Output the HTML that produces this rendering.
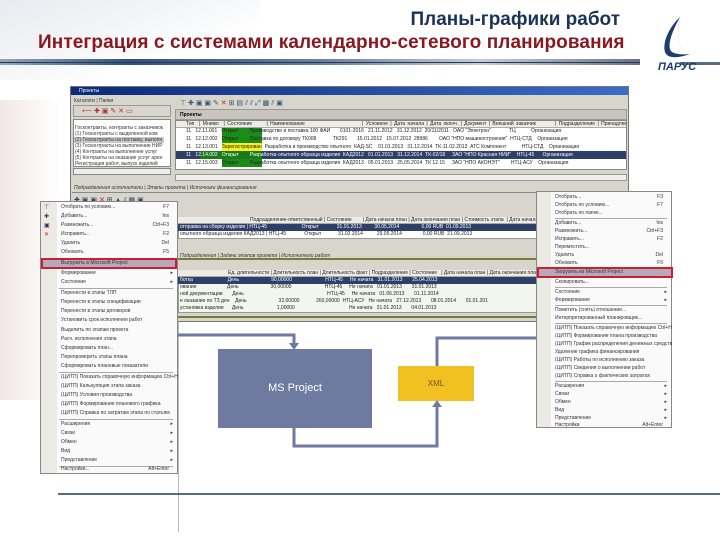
<!DOCTYPE html>
<html><head><meta charset="utf-8"><style>
*{margin:0;padding:0;box-sizing:border-box}
body{width:720px;height:540px;position:relative;overflow:hidden;background:#fff;font-family:"Liberation Sans",sans-serif}
.a{position:absolute}
.t{font-size:5px;color:#333;white-space:nowrap;overflow:hidden}
.row{position:absolute;height:7px;font-size:5px;line-height:7px;white-space:nowrap;overflow:hidden;color:#222}
.mi{position:absolute;left:0;right:0;height:9px;font-size:5px;line-height:9px;padding-left:20px;color:#333;white-space:nowrap}
.sep{position:absolute;left:18px;right:4px;height:1px;background:#aaa}
</style></head><body>
<div class="a" style="left:0;top:0;width:260px;height:80px;background:linear-gradient(160deg,#e8ebf0 0%,#f4f5f7 40%,#fff 70%)"></div>
<div class="a" style="left:0;top:100px;width:60px;height:300px;background:linear-gradient(90deg,#f2e6e6,#fff)"></div>
<div class="a" style="left:0;top:59px;width:640px;height:6px;background:linear-gradient(90deg,#9aa5b5,#34507a 20%,#6d7f9c 50%,#c8ccd3 75%,#6a7486 100%)"></div>
<div class="a" style="left:0;top:62px;width:640px;height:1px;background:#1e3b65"></div>
<div class="a" style="left:680px;top:62px;width:40px;height:3px;background:#5a6a80"></div>
<div class="a" style="right:100px;top:9px;font-size:19px;font-weight:bold;color:#1b3358;white-space:nowrap">Планы-графики работ</div>
<div class="a" style="left:38px;top:32px;font-size:19px;font-weight:bold;color:#8a1820;white-space:nowrap;width:582px;letter-spacing:0.1px">Интеграция с системами календарно-сетевого планирования</div>
<svg class="a" style="left:656px;top:14px" width="46" height="60" viewBox="0 0 46 60">
<path d="M24 3 C14 12 6 28 9 38 C11 44 20 45 34 40 C24 41 15 40 14 35 C12 27 18 14 24 3 Z" fill="#1d3d6e"/>
<path d="M24 3 C22 14 21 26 26 36 C22 28 21 16 24 3Z" fill="#1d3d6e"/>
<text x="2" y="56" font-size="11" font-style="italic" font-weight="bold" fill="#1d3d6e" font-family="Liberation Sans,sans-serif">ПАРУС</text>
</svg>
<div class="a" style="left:70px;top:86px;width:559px;height:236px;background:#d8d6cc;border:1px solid #777"></div>
<div class="a" style="left:71px;top:87px;width:557px;height:8px;background:linear-gradient(90deg,#0b2a78,#3b6cc8);color:#fff;font-size:5px;line-height:8px;padding-left:8px">Проекты</div>
<div class="a t" style="left:74px;top:98px">Каталоги | Папки</div>
<div class="a" style="left:73px;top:105px;width:98px;height:12px;border:1px solid #999"></div>
<div class="a t" style="left:82px;top:107px;color:#a33;font-size:7px">⟵ ✚ ▣ ✎ ✕ ▭</div>
<div class="a" style="left:73px;top:119px;width:98px;height:48px;background:#fff;border:1px solid #888"></div>
<div class="a t" style="left:75px;top:125px;width:88px">Госконтракты, контракты с заказчиком</div>
<div class="a t" style="left:75px;top:131px;width:88px">(1) Госконтракты с выделенной ком</div>
<div class="a" style="left:74px;top:137px;width:90px;height:6px;background:#c9c9c9"></div>
<div class="a t" style="left:75px;top:137px;width:88px">(2) Госконтракты на поставку, выполн</div>
<div class="a t" style="left:75px;top:143px;width:88px">(3) Госконтракты на выполнение НИР</div>
<div class="a t" style="left:75px;top:149px;width:88px">(4) Контракты на выполнение услуг</div>
<div class="a t" style="left:75px;top:155px;width:88px">(5) Контракты на оказание услуг арен</div>
<div class="a t" style="left:75px;top:161px;width:88px">Регистрация работ, выпуск изделий</div>
<div class="a" style="left:73px;top:168px;width:98px;height:7px;background:#eee;border:1px solid #888"></div>
<div class="a t" style="left:180px;top:99px;font-size:7px;color:#357">⊤ ✚ ▣ ▣ ✎ <span style="color:#c22">✕</span> ⊞ ▤ ⫽ ⫽ ⤢ ▩ ⫽ ▣</div>
<div class="a" style="left:175px;top:109px;width:452px;height:11px;background:#c8c6bc;border:1px solid #999;font-size:5px;line-height:10px;padding-left:4px;font-weight:bold">Проекты</div>
<div class="a" style="left:175px;top:120px;width:452px;height:50px;background:#fff;border:1px solid #888"></div>
<div class="a" style="left:176px;top:121px;width:450px;height:7px;background:#ecebe4;border-bottom:1px solid #aaa"></div>
<div class="row" style="left:186px;top:121px;width:440px;word-spacing:1px">Тип &nbsp;| Мнемо &nbsp;| Состояние &nbsp;&nbsp;&nbsp;&nbsp;&nbsp;| Наименование &nbsp;&nbsp;&nbsp;&nbsp;&nbsp;&nbsp;&nbsp;&nbsp;&nbsp;&nbsp;&nbsp;&nbsp;&nbsp;&nbsp;&nbsp;&nbsp;&nbsp;&nbsp;&nbsp;&nbsp;&nbsp;&nbsp;&nbsp;| Условное | Дата начала | Дата оконч. | Документ | Внешний заказчик &nbsp;&nbsp;&nbsp;&nbsp;&nbsp;&nbsp;&nbsp;| Подразделение | Принадлежность</div>
<div class="a" style="left:176px;top:151px;width:450px;height:8px;background:#2e3f6a"></div>
<div class="a" style="left:222px;top:128px;width:40px;height:8px;background:#1a8c1a"></div>
<div class="a" style="left:222px;top:136px;width:40px;height:8px;background:#1a8c1a"></div>
<div class="a" style="left:222px;top:143px;width:40px;height:8px;background:#f6f020"></div>
<div class="a" style="left:200px;top:151px;width:62px;height:8px;background:#1a7a1a"></div>
<div class="a" style="left:222px;top:159px;width:40px;height:8px;background:#1a8c1a"></div>
<div class="row" style="left:186px;top:128px;width:440px">11 &nbsp;&nbsp;12.11.001 &nbsp;&nbsp;Открыт &nbsp;&nbsp;&nbsp;&nbsp;&nbsp;&nbsp;&nbsp;Производство и поставка 100 ФАИ &nbsp;&nbsp;&nbsp;&nbsp;&nbsp;&nbsp;0101-2016 &nbsp;&nbsp;21.11.2012 &nbsp;&nbsp;31.12.2012 &nbsp;20/11/2011 &nbsp;&nbsp;ОАО "Электрон" &nbsp;&nbsp;&nbsp;&nbsp;&nbsp;&nbsp;&nbsp;&nbsp;&nbsp;&nbsp;&nbsp;&nbsp;ТЦ &nbsp;&nbsp;&nbsp;&nbsp;&nbsp;&nbsp;&nbsp;&nbsp;&nbsp;&nbsp;Организация</div>
<div class="row" style="left:186px;top:136px;width:440px">11 &nbsp;&nbsp;12.12.002 &nbsp;&nbsp;Открыт &nbsp;&nbsp;&nbsp;&nbsp;&nbsp;&nbsp;&nbsp;Поставка по договору ТК008 &nbsp;&nbsp;&nbsp;&nbsp;&nbsp;&nbsp;&nbsp;&nbsp;&nbsp;&nbsp;&nbsp;ТК291 &nbsp;&nbsp;&nbsp;&nbsp;&nbsp;&nbsp;15.01.2012 &nbsp;&nbsp;15.07.2012 &nbsp;28986 &nbsp;&nbsp;&nbsp;&nbsp;&nbsp;&nbsp;&nbsp;ОАО "НПО машиностроения" &nbsp;НТЦ-СТД &nbsp;&nbsp;&nbsp;Организация</div>
<div class="row" style="left:186px;top:144px;width:440px">11 &nbsp;&nbsp;12.13.001 &nbsp;&nbsp;Зарегистрирован &nbsp;Разработка и производство опытного &nbsp;КАД-SC &nbsp;&nbsp;&nbsp;01.01.2013 &nbsp;&nbsp;31.12.2014 &nbsp;ТК-11.02.2013 &nbsp;АТС Компонент &nbsp;&nbsp;&nbsp;&nbsp;&nbsp;&nbsp;&nbsp;&nbsp;&nbsp;&nbsp;НТЦ-СТД &nbsp;&nbsp;&nbsp;Организация</div>
<div class="row" style="left:186px;top:152px;width:440px;color:#fff">11 &nbsp;&nbsp;12.14.002 &nbsp;&nbsp;Открыт &nbsp;&nbsp;&nbsp;&nbsp;&nbsp;&nbsp;&nbsp;Разработка опытного образца изделия &nbsp;КАД2012 &nbsp;&nbsp;01.01.2013 &nbsp;&nbsp;31.12.2014 &nbsp;ТК-02/18 &nbsp;&nbsp;&nbsp;&nbsp;ЗАО "НПО Красная НИИ" &nbsp;&nbsp;&nbsp;НТЦ-45 &nbsp;&nbsp;&nbsp;&nbsp;&nbsp;Организация</div>
<div class="row" style="left:186px;top:160px;width:440px">11 &nbsp;&nbsp;12.15.003 &nbsp;&nbsp;Открыт &nbsp;&nbsp;&nbsp;&nbsp;&nbsp;&nbsp;&nbsp;Разработка опытного образца изделия &nbsp;КАД2013 &nbsp;&nbsp;05.01.2013 &nbsp;&nbsp;25.05.2014 &nbsp;ТК 12.15 &nbsp;&nbsp;&nbsp;&nbsp;ЗАО "НПО АКОНЭТ" &nbsp;&nbsp;&nbsp;&nbsp;&nbsp;&nbsp;&nbsp;НТЦ-АСУ &nbsp;&nbsp;&nbsp;Организация</div>
<div class="a" style="left:175px;top:174px;width:452px;height:7px;background:#eee;border:1px solid #999"></div>
<div class="a t" style="left:74px;top:185px;font-style:italic">Подразделения исполнители | Этапы проекта | Источники финансирования</div>
<div class="a" style="left:72px;top:192px;width:556px;height:1px;background:#888"></div>
<div class="a t" style="left:74px;top:196px;font-size:7px;color:#345">✚ ▣ ▣ <span style="color:#c22">✕</span> ⊞ ▲ ⫽ ▩ ▣</div>
<div class="a" style="left:178px;top:217px;width:450px;height:22px;background:#fff;border:1px solid #999"></div>
<div class="a" style="left:178px;top:217px;width:450px;height:7px;background:#ecebe4;border-bottom:1px solid #aaa"></div>
<div class="row" style="left:250px;top:217px;width:378px">Подразделение-ответственный | Состояние &nbsp;&nbsp;&nbsp;&nbsp;&nbsp;&nbsp;&nbsp;| Дата начала план | Дата окончания план | Стоимость этапа &nbsp;| Дата начала</div>
<div class="a" style="left:178px;top:224px;width:450px;height:7px;background:#2e3f6a"></div>
<div class="row" style="left:180px;top:224px;width:448px;color:#fff">отправка на сборку изделия | НТЦ-45 &nbsp;&nbsp;&nbsp;&nbsp;&nbsp;&nbsp;&nbsp;&nbsp;&nbsp;&nbsp;&nbsp;&nbsp;&nbsp;&nbsp;&nbsp;&nbsp;&nbsp;&nbsp;&nbsp;&nbsp;&nbsp;&nbsp;&nbsp;&nbsp;Открыт &nbsp;&nbsp;&nbsp;&nbsp;&nbsp;&nbsp;&nbsp;&nbsp;&nbsp;&nbsp;&nbsp;&nbsp;31.01.2013 &nbsp;&nbsp;&nbsp;&nbsp;&nbsp;&nbsp;&nbsp;&nbsp;30.05.2014 &nbsp;&nbsp;&nbsp;&nbsp;&nbsp;&nbsp;&nbsp;&nbsp;&nbsp;&nbsp;&nbsp;&nbsp;&nbsp;&nbsp;&nbsp;0,00 RUB &nbsp;01.09.2013</div>
<div class="row" style="left:180px;top:231px;width:448px">опытного образца изделия КАД2013 | НТЦ-45 &nbsp;&nbsp;&nbsp;&nbsp;&nbsp;&nbsp;&nbsp;&nbsp;&nbsp;&nbsp;&nbsp;&nbsp;Открыт &nbsp;&nbsp;&nbsp;&nbsp;&nbsp;&nbsp;&nbsp;&nbsp;&nbsp;&nbsp;&nbsp;31.02.2014 &nbsp;&nbsp;&nbsp;&nbsp;&nbsp;&nbsp;&nbsp;&nbsp;&nbsp;29.05.2014 &nbsp;&nbsp;&nbsp;&nbsp;&nbsp;&nbsp;&nbsp;&nbsp;&nbsp;&nbsp;&nbsp;&nbsp;&nbsp;&nbsp;0,00 RUB &nbsp;21.09.2013</div>
<div class="a t" style="left:180px;top:253px;font-style:italic">Подразделения | Задачи этапов проекта | Исполнители работ</div>
<div class="a" style="left:178px;top:258px;width:450px;height:2px;background:#7a7a3a"></div>
<div class="a" style="left:178px;top:270px;width:450px;height:43px;background:#f2f6ec;border:1px solid #999"></div>
<div class="a" style="left:178px;top:270px;width:450px;height:7px;background:#ecebe4;border-bottom:1px solid #aaa"></div>
<div class="row" style="left:228px;top:270px;width:400px">Ед. длительности | Длительность план | Длительность факт | Подразделение | Состояние &nbsp;&nbsp;| Дата начала план | Дата окончания план | Дата</div>
<div class="a" style="left:178px;top:277px;width:450px;height:7px;background:#2e3f6a"></div>
<div class="row" style="left:180px;top:277px;width:448px;color:#fff">ботка &nbsp;&nbsp;&nbsp;&nbsp;&nbsp;&nbsp;&nbsp;&nbsp;&nbsp;&nbsp;&nbsp;&nbsp;&nbsp;&nbsp;&nbsp;&nbsp;&nbsp;&nbsp;&nbsp;&nbsp;&nbsp;&nbsp;&nbsp;&nbsp;День &nbsp;&nbsp;&nbsp;&nbsp;&nbsp;&nbsp;&nbsp;&nbsp;&nbsp;&nbsp;&nbsp;&nbsp;&nbsp;&nbsp;&nbsp;&nbsp;&nbsp;&nbsp;&nbsp;&nbsp;&nbsp;&nbsp;90,00000 &nbsp;&nbsp;&nbsp;&nbsp;&nbsp;&nbsp;&nbsp;&nbsp;&nbsp;&nbsp;&nbsp;&nbsp;&nbsp;&nbsp;&nbsp;&nbsp;&nbsp;&nbsp;&nbsp;&nbsp;&nbsp;&nbsp;&nbsp;НТЦ-45 &nbsp;&nbsp;&nbsp;&nbsp;Не начата &nbsp;&nbsp;31.01.2013 &nbsp;&nbsp;&nbsp;&nbsp;&nbsp;&nbsp;25.04.2013</div>
<div class="row" style="left:180px;top:284px;width:448px">ование &nbsp;&nbsp;&nbsp;&nbsp;&nbsp;&nbsp;&nbsp;&nbsp;&nbsp;&nbsp;&nbsp;&nbsp;&nbsp;&nbsp;&nbsp;&nbsp;&nbsp;&nbsp;&nbsp;&nbsp;&nbsp;День &nbsp;&nbsp;&nbsp;&nbsp;&nbsp;&nbsp;&nbsp;&nbsp;&nbsp;&nbsp;&nbsp;&nbsp;&nbsp;&nbsp;&nbsp;&nbsp;&nbsp;&nbsp;&nbsp;&nbsp;&nbsp;&nbsp;30,00000 &nbsp;&nbsp;&nbsp;&nbsp;&nbsp;&nbsp;&nbsp;&nbsp;&nbsp;&nbsp;&nbsp;&nbsp;&nbsp;&nbsp;&nbsp;&nbsp;&nbsp;&nbsp;&nbsp;&nbsp;&nbsp;&nbsp;&nbsp;НТЦ-45 &nbsp;&nbsp;&nbsp;&nbsp;Не начата &nbsp;&nbsp;01.01.2013 &nbsp;&nbsp;&nbsp;&nbsp;&nbsp;&nbsp;31.01.2013</div>
<div class="row" style="left:180px;top:291px;width:448px">ной документации &nbsp;&nbsp;&nbsp;&nbsp;&nbsp;&nbsp;День &nbsp;&nbsp;&nbsp;&nbsp;&nbsp;&nbsp;&nbsp;&nbsp;&nbsp;&nbsp;&nbsp;&nbsp;&nbsp;&nbsp;&nbsp;&nbsp;&nbsp;&nbsp;&nbsp;&nbsp;&nbsp;&nbsp;&nbsp;&nbsp;&nbsp;&nbsp;&nbsp;&nbsp;&nbsp;&nbsp;&nbsp;&nbsp;&nbsp;&nbsp;&nbsp;&nbsp;&nbsp;&nbsp;&nbsp;&nbsp;&nbsp;&nbsp;&nbsp;&nbsp;&nbsp;&nbsp;&nbsp;&nbsp;&nbsp;&nbsp;&nbsp;&nbsp;&nbsp;&nbsp;&nbsp;&nbsp;&nbsp;&nbsp;&nbsp;НТЦ-45 &nbsp;&nbsp;&nbsp;&nbsp;Не начата &nbsp;&nbsp;01.06.2013 &nbsp;&nbsp;&nbsp;&nbsp;&nbsp;&nbsp;01.11.2014</div>
<div class="row" style="left:180px;top:298px;width:448px">е оказание по ТЗ ден &nbsp;&nbsp;&nbsp;День &nbsp;&nbsp;&nbsp;&nbsp;&nbsp;&nbsp;&nbsp;&nbsp;&nbsp;&nbsp;&nbsp;&nbsp;&nbsp;&nbsp;&nbsp;&nbsp;&nbsp;&nbsp;&nbsp;&nbsp;&nbsp;&nbsp;32,00000 &nbsp;&nbsp;&nbsp;&nbsp;&nbsp;&nbsp;&nbsp;&nbsp;&nbsp;&nbsp;&nbsp;260,00000 &nbsp;НТЦ-АСУ &nbsp;&nbsp;Не начата &nbsp;&nbsp;27.12.2013 &nbsp;&nbsp;&nbsp;&nbsp;&nbsp;&nbsp;08.01.2014 &nbsp;&nbsp;&nbsp;&nbsp;&nbsp;&nbsp;01.01.201</div>
<div class="row" style="left:180px;top:305px;width:448px">установка изделия &nbsp;&nbsp;&nbsp;&nbsp;&nbsp;День &nbsp;&nbsp;&nbsp;&nbsp;&nbsp;&nbsp;&nbsp;&nbsp;&nbsp;&nbsp;&nbsp;&nbsp;&nbsp;&nbsp;&nbsp;&nbsp;&nbsp;&nbsp;&nbsp;&nbsp;&nbsp;&nbsp;&nbsp;1,00000 &nbsp;&nbsp;&nbsp;&nbsp;&nbsp;&nbsp;&nbsp;&nbsp;&nbsp;&nbsp;&nbsp;&nbsp;&nbsp;&nbsp;&nbsp;&nbsp;&nbsp;&nbsp;&nbsp;&nbsp;&nbsp;&nbsp;&nbsp;&nbsp;&nbsp;&nbsp;&nbsp;&nbsp;&nbsp;&nbsp;&nbsp;&nbsp;&nbsp;&nbsp;&nbsp;&nbsp;&nbsp;&nbsp;Не начата &nbsp;&nbsp;31.01.2013 &nbsp;&nbsp;&nbsp;&nbsp;&nbsp;&nbsp;04.01.2013</div>
<div class="a" style="left:178px;top:316px;width:450px;height:2px;background:#7a7a3a"></div>
<div class="a" style="left:178px;top:322px;width:1px;height:210px;background:#bbb"></div>
<div class="a" style="left:218px;top:349px;width:154px;height:79px;background:#6e7aa0;color:#fff;font-size:11px;text-align:center;line-height:79px">MS Project</div>
<div class="a" style="left:398px;top:366px;width:76px;height:35px;background:#f2c021;color:#6a5a30;font-size:8px;text-align:center;line-height:35px">XML</div>
<svg class="a" style="left:0;top:0" width="720" height="540">
<g stroke="#6e7aa0" stroke-width="3" fill="none">
<path d="M110 268 V335 H294 V344"/>
<path d="M294 428 V446 H437 V406"/>
<path d="M437 366 V338 H604 V284"/>
</g>
<g fill="#6e7aa0">
<path d="M289 343 H299 L294 350 Z"/>
<path d="M432 407 H442 L437 400 Z"/>
<path d="M599 285 H609 L604 278 Z"/>
</g>
<line x1="58" y1="494" x2="720" y2="494" stroke="#1f3f4f" stroke-width="1.5"/>
</svg>
<div class="a" style="left:40px;top:201px;width:138px;height:273px;background:#fafafa;border:1px solid #888">
<div class="a" style="left:0;top:0;width:16px;height:100%;background:#eceae4"></div>
<div class="mi" style="top:1px">Отобрать по условию... <span style="float:right;padding-right:8px">F7</span></div>
<div class="mi" style="top:10px">Добавить... <span style="float:right;padding-right:8px">Ins</span></div>
<div class="mi" style="top:19px">Размножить... <span style="float:right;padding-right:8px">Ctrl+F3</span></div>
<div class="mi" style="top:28px">Исправить... <span style="float:right;padding-right:8px">F2</span></div>
<div class="mi" style="top:37px">Удалить <span style="float:right;padding-right:8px">Del</span></div>
<div class="mi" style="top:46px">Обновить <span style="float:right;padding-right:8px">F5</span></div>
<div class="a" style="left:0;top:56px;width:136px;height:11px;background:#b7a9bb;border:2px solid #c8202c"></div>
<div class="mi" style="top:57px">Выгрузить в Microsoft Project</div>
<div class="mi" style="top:67px">Формирование <span style="float:right;padding-right:4px">▸</span></div>
<div class="mi" style="top:76px">Состояние <span style="float:right;padding-right:4px">▸</span></div>
<div class="sep" style="top:86px"></div>
<div class="mi" style="top:87px">Перенести в этапы ТЛП</div>
<div class="mi" style="top:96px">Перенести в этапы спецификации</div>
<div class="mi" style="top:105px">Перенести в этапы договоров</div>
<div class="mi" style="top:114px">Установить срок исполнения работ</div>
<div class="mi" style="top:124px">Выделить по этапам проекта</div>
<div class="mi" style="top:133px">Расч. исполнения этапа</div>
<div class="mi" style="top:142px">Сформировать план...</div>
<div class="mi" style="top:151px">Перепроверить этапы плана</div>
<div class="mi" style="top:160px">Сформировать плановые показатели</div>
<div class="sep" style="top:170px"></div>
<div class="mi" style="top:171px">(ЦИТП) Показать справочную информацию Ctrl+H</div>
<div class="mi" style="top:180px">(ЦИТП) Калькуляция этапа заказа</div>
<div class="mi" style="top:189px">(ЦИТП) Условия производства</div>
<div class="mi" style="top:198px">(ЦИТП) Формирование планового графика</div>
<div class="mi" style="top:207px">(ЦИТП) Справка по затратам этапа по статьям</div>
<div class="sep" style="top:217px"></div>
<div class="mi" style="top:218px">Расширения <span style="float:right;padding-right:4px">▸</span></div>
<div class="mi" style="top:227px">Связи <span style="float:right;padding-right:4px">▸</span></div>
<div class="mi" style="top:236px">Обмен <span style="float:right;padding-right:4px">▸</span></div>
<div class="mi" style="top:245px">Вид <span style="float:right;padding-right:4px">▸</span></div>
<div class="mi" style="top:254px">Представление <span style="float:right;padding-right:4px">▸</span></div>
<div class="sep" style="top:264px"></div>
<div class="mi" style="top:263px">Настройки... <span style="float:right;padding-right:8px">Alt+Enter</span></div>
<div class="a t" style="left:3px;top:2px;font-size:6px;line-height:9px;color:#335">⊤<br>✚<br>▣<br><span style="color:#c22">✕</span></div>
</div>
<div class="a" style="left:536px;top:191px;width:136px;height:237px;background:#fafafa;border:1px solid #888">
<div class="a" style="left:0;top:0;width:14px;height:100%;background:#eceae4"></div>
<div class="mi" style="top:1px;padding-left:18px">Отобрать... <span style="float:right;padding-right:8px">F3</span></div>
<div class="mi" style="top:9px;padding-left:18px">Отобрать по условию... <span style="float:right;padding-right:8px">F7</span></div>
<div class="mi" style="top:17px;padding-left:18px">Отобрать по папке...</div>
<div class="sep" style="top:26px"></div>
<div class="mi" style="top:27px;padding-left:18px">Добавить... <span style="float:right;padding-right:8px">Ins</span></div>
<div class="mi" style="top:35px;padding-left:18px">Размножить... <span style="float:right;padding-right:8px">Ctrl+F3</span></div>
<div class="mi" style="top:43px;padding-left:18px">Исправить... <span style="float:right;padding-right:8px">F2</span></div>
<div class="mi" style="top:51px;padding-left:18px">Переместить...</div>
<div class="mi" style="top:59px;padding-left:18px">Удалить <span style="float:right;padding-right:8px">Del</span></div>
<div class="mi" style="top:67px;padding-left:18px">Обновить <span style="float:right;padding-right:8px">F5</span></div>
<div class="a" style="left:0;top:75px;width:136px;height:11px;background:#b7a9bb;border:2px solid #c8202c"></div>
<div class="mi" style="top:76px;padding-left:18px">Загрузить из Microsoft Project</div>
<div class="mi" style="top:86px;padding-left:18px">Скопировать...</div>
<div class="sep" style="top:95px"></div>
<div class="mi" style="top:96px;padding-left:18px">Состояние <span style="float:right;padding-right:4px">▸</span></div>
<div class="mi" style="top:104px;padding-left:18px">Формирование <span style="float:right;padding-right:4px">▸</span></div>
<div class="sep" style="top:113px"></div>
<div class="mi" style="top:114px;padding-left:18px">Пометить (снять) отношение...</div>
<div class="mi" style="top:122px;padding-left:18px">Интерпретированный планировщик...</div>
<div class="sep" style="top:131px"></div>
<div class="mi" style="top:132px;padding-left:18px">(ЦИТП) Показать справочную информацию Ctrl+H</div>
<div class="mi" style="top:140px;padding-left:18px">(ЦИТП) Формирование плана производства</div>
<div class="mi" style="top:148px;padding-left:18px">(ЦИТП) График распределения денежных средств</div>
<div class="mi" style="top:156px;padding-left:18px">Удаление графика финансирования</div>
<div class="mi" style="top:164px;padding-left:18px">(ЦИТП) Работы по исполнению заказа</div>
<div class="mi" style="top:172px;padding-left:18px">(ЦИТП) Сведения о выполнении работ</div>
<div class="mi" style="top:180px;padding-left:18px">(ЦИТП) Справка о фактических затратах</div>
<div class="sep" style="top:189px"></div>
<div class="mi" style="top:190px;padding-left:18px">Расширения <span style="float:right;padding-right:4px">▸</span></div>
<div class="mi" style="top:198px;padding-left:18px">Связи <span style="float:right;padding-right:4px">▸</span></div>
<div class="mi" style="top:206px;padding-left:18px">Обмен <span style="float:right;padding-right:4px">▸</span></div>
<div class="mi" style="top:214px;padding-left:18px">Вид <span style="float:right;padding-right:4px">▸</span></div>
<div class="mi" style="top:222px;padding-left:18px">Представление <span style="float:right;padding-right:4px">▸</span></div>
<div class="mi" style="top:229px;padding-left:18px">Настройки <span style="float:right;padding-right:8px">Alt+Enter</span></div>
</div>
</body></html>
